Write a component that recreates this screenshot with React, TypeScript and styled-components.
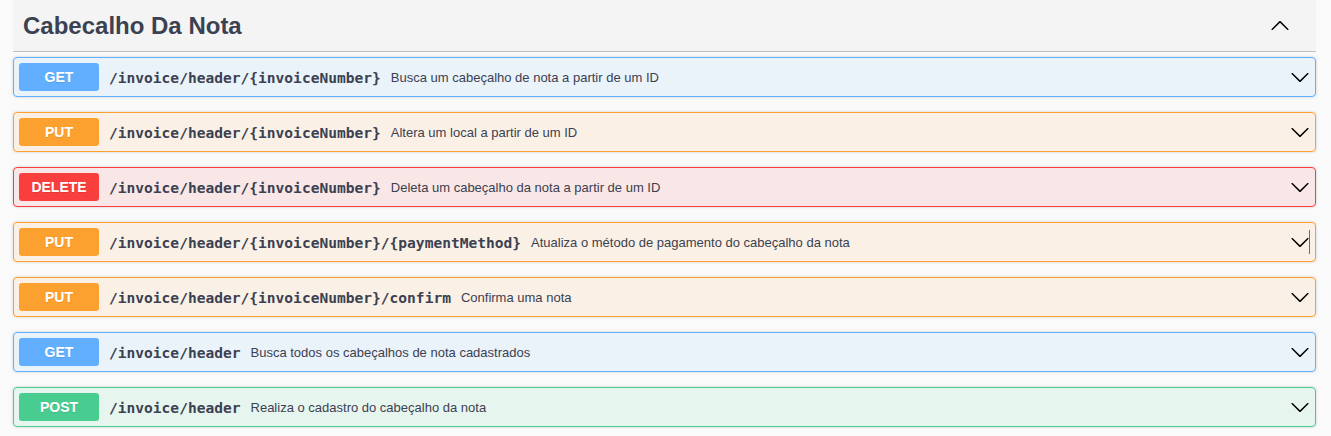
import React from "react";
import styled, { createGlobalStyle } from "styled-components";

type Method = "GET" | "PUT" | "DELETE" | "POST";

const COLORS: Record<Method, { solid: string; bg: string }> = {
  GET: { solid: "#61affe", bg: "rgba(97,175,254,.1)" },
  PUT: { solid: "#fca130", bg: "rgba(252,161,48,.1)" },
  DELETE: { solid: "#f93e3e", bg: "rgba(249,62,62,.1)" },
  POST: { solid: "#49cc90", bg: "rgba(73,204,144,.1)" },
};

const Global = createGlobalStyle`
  html, body { margin: 0; padding: 0; background: #fafafa; }
  body { font-family: "Liberation Sans", Arial, sans-serif; color: #3b4151; }
  * { box-sizing: border-box; }
`;

const Page = styled.div`
  padding: 0 15px 0 13px;
  width: 1331px;
`;

const Section = styled.section`
  display: flex;
  flex-direction: column;
  width: 1303px;
`;

const TagHeader = styled.div`
  display: flex;
  align-items: center;
  justify-content: space-between;
  height: 52px;
  padding: 1px 26px 0 10px;
  background: #f4f4f4;
  border-bottom: 1px solid rgba(59, 65, 81, 0.3);
  margin-bottom: 5px;
`;

const Title = styled.h3`
  margin: 0;
  font-family: "Liberation Sans", Arial, sans-serif;
  font-size: 24px;
  font-weight: 700;
  color: #3b4151;
`;

const Arrow = styled.svg<{ $up?: boolean }>`
  width: 20px;
  height: 20px;
  flex: none;
  fill: #000;
  transform: ${(p) => (p.$up ? "rotate(180deg)" : "none")};
`;

const Block = styled.div<{ $m: Method }>`
  position: relative;
  display: flex;
  align-items: center;
  height: 40px;
  margin-bottom: 15px;
  padding: 5px 5px 5px 5px;
  border: 1px solid ${(p) => COLORS[p.$m].solid};
  background: ${(p) => COLORS[p.$m].bg};
  border-radius: 4px;
  box-shadow: 0 0 3px rgba(0, 0, 0, 0.19);
`;

const Badge = styled.span<{ $m: Method }>`
  flex: none;
  width: 80px;
  height: 28px;
  display: flex;
  align-items: center;
  justify-content: center;
  border-radius: 3px;
  background: ${(p) => COLORS[p.$m].solid};
  color: #fff;
  font-family: "Liberation Sans", Arial, sans-serif;
  font-size: 14px;
  font-weight: 700;
  text-shadow: 0 1px 0 rgba(0, 0, 0, 0.1);
`;

const Path = styled.span`
  padding: 0 10px;
  font-family: "DejaVu Sans Mono", "Liberation Mono", monospace;
  font-size: 14.57px;
  font-weight: 700;
  color: #3b4151;
  white-space: nowrap;
`;

const Summary = styled.span`
  flex: 1;
  font-family: "Liberation Sans", Arial, sans-serif;
  font-size: 13px;
  color: #3b4151;
  white-space: nowrap;
`;

const Caret = styled.span`
  position: absolute;
  right: 5px;
  top: 7px;
  width: 1px;
  height: 24px;
  background: #6b6b6b;
`;

const ARROW_PATH =
  "M17.418 6.109c.272-.268.709-.268.979 0s.271.701 0 .969l-7.908 7.83c-.27.268-.707.268-.979 0l-7.908-7.83c-.27-.268-.27-.701 0-.969.271-.268.709-.268.979 0L10 13.25l7.418-7.141z";

const ops: { m: Method; path: string; summary: string; caret?: boolean }[] = [
  { m: "GET", path: "/invoice/header/{invoiceNumber}", summary: "Busca um cabeçalho de nota a partir de um ID" },
  { m: "PUT", path: "/invoice/header/{invoiceNumber}", summary: "Altera um local a partir de um ID" },
  { m: "DELETE", path: "/invoice/header/{invoiceNumber}", summary: "Deleta um cabeçalho da nota a partir de um ID" },
  {
    m: "PUT",
    path: "/invoice/header/{invoiceNumber}/{paymentMethod}",
    summary: "Atualiza o método de pagamento do cabeçalho da nota",
    caret: true,
  },
  { m: "PUT", path: "/invoice/header/{invoiceNumber}/confirm", summary: "Confirma uma nota" },
  { m: "GET", path: "/invoice/header", summary: "Busca todos os cabeçalhos de nota cadastrados" },
  { m: "POST", path: "/invoice/header", summary: "Realiza o cadastro do cabeçalho da nota" },
];

export default function App() {
  return (
    <>
      <Global />
      <Page>
        <Section>
          <TagHeader>
            <Title>Cabecalho Da Nota</Title>
            <Arrow $up viewBox="0 0 20 20">
              <path d={ARROW_PATH} />
            </Arrow>
          </TagHeader>
          {ops.map((o, i) => (
            <Block key={i} $m={o.m}>
              <Badge $m={o.m}>{o.m}</Badge>
              <Path>{o.path}</Path>
              <Summary>{o.summary}</Summary>
              <Arrow viewBox="0 0 20 20">
                <path d={ARROW_PATH} />
              </Arrow>
              {o.caret && <Caret />}
            </Block>
          ))}
        </Section>
      </Page>
    </>
  );
}
